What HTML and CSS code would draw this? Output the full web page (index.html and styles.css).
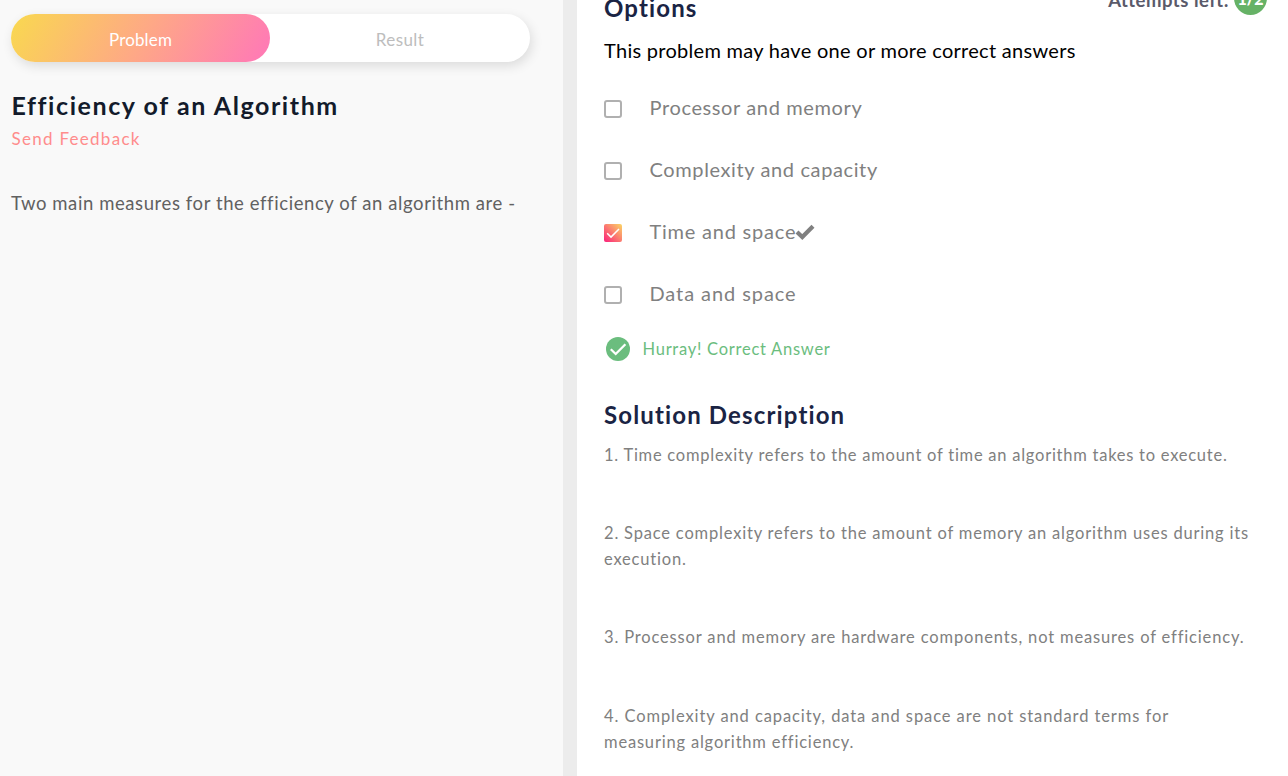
FILE: index.html
```
<!DOCTYPE html>
<html lang="en">
<head>
<meta charset="utf-8">
<title>Efficiency of an Algorithm</title>
<link rel="stylesheet" href="styles.css">
</head>
<body>
<div class="page">
  <section class="problem">
    <nav class="tabs">
      <a class="tab tab-active">Problem</a>
      <a class="tab tab-result">Result</a>
    </nav>
    <h1 class="title">Efficiency of an Algorithm</h1>
    <a class="feedback">Send Feedback</a>
    <p class="question">Two main measures for the efficiency of an algorithm are -</p>
  </section>
  <div class="divider"></div>
  <main class="answer">
    <header class="answer-head">
      <h2 class="heading heading-options">Options</h2>
      <div class="attempts"><span class="attempts-label">Attempts left:</span><span class="attempts-count">1/2</span></div>
    </header>
    <p class="hint">This problem may have one or more correct answers</p>
    <ul class="options">
      <li class="option"><span class="box"></span><span class="label">Processor and memory</span></li>
      <li class="option"><span class="box"></span><span class="label">Complexity and capacity</span></li>
      <li class="option">
        <span class="box box-checked"><svg width="18" height="18" viewBox="0 0 18 18"><path d="M3.2 9.3 7 13.1 15 5" fill="none" stroke="#fff" stroke-width="1.5"/></svg></span>
        <span class="label label-space">Time and space</span>
        <svg class="tick" width="20" height="20" viewBox="0 0 20 20"><path d="M2 10 7.3 15 18 4.3" fill="none" stroke="#808080" stroke-width="4.2"/></svg>
      </li>
      <li class="option"><span class="box"></span><span class="label label-data">Data and space</span></li>
    </ul>
    <div class="verdict">
      <svg width="24" height="24" viewBox="0 0 24 24"><circle cx="12" cy="12" r="12" fill="#6bbd7e"/><path d="M4.8 12.2 9.7 17 19.4 7.2" fill="none" stroke="#fff" stroke-width="2.3"/></svg>
      <span class="verdict-text">Hurray! Correct Answer</span>
    </div>
    <h2 class="heading">Solution Description</h2>
    <div class="solution">
      <p class="line-one">1. Time complexity refers to the amount of time an algorithm takes to execute.</p>
      <p>2. Space complexity refers to the amount of memory an algorithm uses during its<br>execution.</p>
      <p class="line-three">3. Processor and memory are hardware components, not measures of efficiency.</p>
      <p class="line-four">4. Complexity and capacity, data and space are not standard terms for<br><span class="line-last">measuring algorithm efficiency.</span></p>
    </div>
  </main>
</div>
</body>
</html>
```
FILE: styles.css
```
* { box-sizing: border-box; }
body { margin: 0; font-family: Lato, "Open Sans", sans-serif; font-size: 16px; }
h1, h2, p, ul { margin: 0; padding: 0; }
p, h1, h2, .label, .tab { white-space: nowrap; }
.page { display: flex; height: 776px; overflow: hidden; background: #fff; }

.problem { width: 563px; flex: none; padding: 14px 33px 0 11px; background: #f9f9f9; }
.tabs { display: flex; height: 48px; border-radius: 24px; background: #fff; box-shadow: 2px 4px 12px rgba(0, 0, 0, .12); }
.tab { flex: 1; padding-top: 2px; line-height: 48px; text-align: center; font-size: 17px; letter-spacing: .16px; color: #bdbdbd; }
.tab-active { flex: none; width: 259px; height: 48px; border-radius: 24px; color: #fff; background: linear-gradient(120deg, #f9d94f 0%, #fea985 50%, #ff7cb3 95%); }
.tab-result { letter-spacing: .4px; }
.title { margin: 28px 0 0 .5px; font-size: 25px; line-height: 30px; letter-spacing: 1.58px; color: #131b2b; }
.feedback { display: block; margin: 9px 0 0 .5px; font-size: 17px; line-height: 20px; letter-spacing: 1.28px; color: #ff8c8c; }
.question { margin-top: 42px; font-size: 18.5px; line-height: 24px; letter-spacing: .59px; color: #616161; }

.divider { width: 14px; flex: none; background: #ececec; }

.answer { flex: 1; padding-left: 27px; }
.answer-head { display: flex; justify-content: space-between; height: 22px; }
.heading { font-size: 24px; line-height: 30px; letter-spacing: 1.14px; color: #1a2444; }
.heading-options { margin-top: -7px; }
.attempts { display: flex; align-items: center; gap: 6px; height: 34px; margin: -19px 21px 0 0; }
.attempts-label { padding-top: 3px; font-size: 18.5px; font-weight: 700; line-height: 32px; letter-spacing: .5px; margin-right: -1px; color: #5a5a6a; }
.attempts-count { width: 33px; height: 34px; border-radius: 50%; background: #66b266; color: #fff; font-size: 16px; font-weight: 900; line-height: 35px; text-align: center; }
.hint { margin-top: 16px; font-size: 20px; line-height: 24px; letter-spacing: .29px; color: #000; }
.options { list-style: none; margin-top: 16px; }
.option { display: flex; align-items: center; height: 62px; }
.box { width: 18px; height: 18px; flex: none; margin: 0 27.5px 0 0; border: 2px solid #b0b0b0; border-radius: 3px; }
.box-checked { border: 0; border-radius: 2px; background: linear-gradient(45deg, #fb1f7b, #fbd765); }
.box svg { display: block; }
.label { margin-top: -4px; font-size: 20px; line-height: 24px; letter-spacing: .62px; color: #808080; }
.label-space { letter-spacing: .78px; }
.label-data { letter-spacing: .92px; }
.tick { margin: -2px 0 0 -1.5px; }
.verdict { display: flex; align-items: center; gap: 12.5px; height: 24px; margin: 11px 0 0 2px; color: #6bbd7e; }
.verdict-text { margin-top: 0; font-size: 16.5px; line-height: 20px; letter-spacing: .74px; }
.verdict + .heading { margin-top: 39px; }
.solution { margin-top: 12px; font-size: 16.5px; line-height: 26.07px; letter-spacing: .81px; color: #808080; }
.solution p + p { margin-top: 52.1px; }
.line-one { letter-spacing: .75px; }
.line-three { letter-spacing: .84px; }
.line-four { letter-spacing: .91px; }
.line-last { letter-spacing: .81px; }
```
